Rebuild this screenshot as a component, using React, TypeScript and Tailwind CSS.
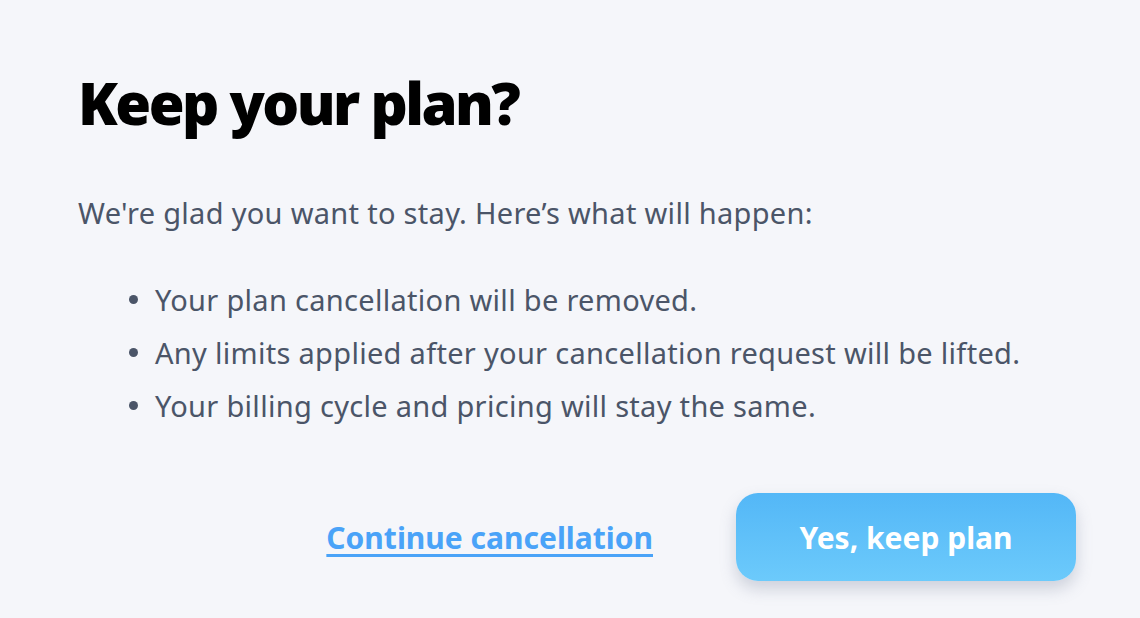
import React from "react";

export default function App() {
  const items = [
    "Your plan cancellation will be removed.",
    "Any limits applied after your cancellation request will be lifted.",
    "Your billing cycle and pricing will stay the same.",
  ];
  return (
    <div
      className="w-[1140px] h-[618px] bg-[#f5f6fa] overflow-hidden"
      style={{ fontFamily: "'Noto Sans', 'Open Sans', sans-serif" }}
    >
      <div className="pl-[78px] pr-[64px] pt-[70px] flex flex-col">
        <h1 className="text-[58px] leading-[66px] font-black text-black tracking-[-2.5px]">
          Keep your plan?
        </h1>
        <p className="mt-[59px] text-[29px] leading-[36px] tracking-[0.3px] text-[#4b5568]">
          We're glad you want to stay. Here’s what will happen:
        </p>
        <ul className="mt-[42px] pl-[51px] flex flex-col text-[29px] leading-[53px] tracking-[0.3px] text-[#4b5568]">
          {items.map((t) => (
            <li key={t} className="flex items-center">
              <span className="w-[9px] h-[9px] rounded-full bg-[#4b5568] mr-[17px] shrink-0" />
              {t}
            </li>
          ))}
        </ul>
        <div className="mt-[61px] flex items-center justify-end gap-[83px]">
          <a
            href="#"
            className="text-[30px] font-bold text-[#4aa3f8] underline underline-offset-[5px] decoration-[3px]"
          >
            Continue cancellation
          </a>
          <button className="w-[340px] h-[88px] rounded-[22px] bg-gradient-to-b from-[#53b7f7] to-[#6ccafb] text-white text-[30px] font-bold shadow-[0_8px_16px_rgba(100,110,140,0.28)]">
            Yes, keep plan
          </button>
        </div>
      </div>
    </div>
  );
}
